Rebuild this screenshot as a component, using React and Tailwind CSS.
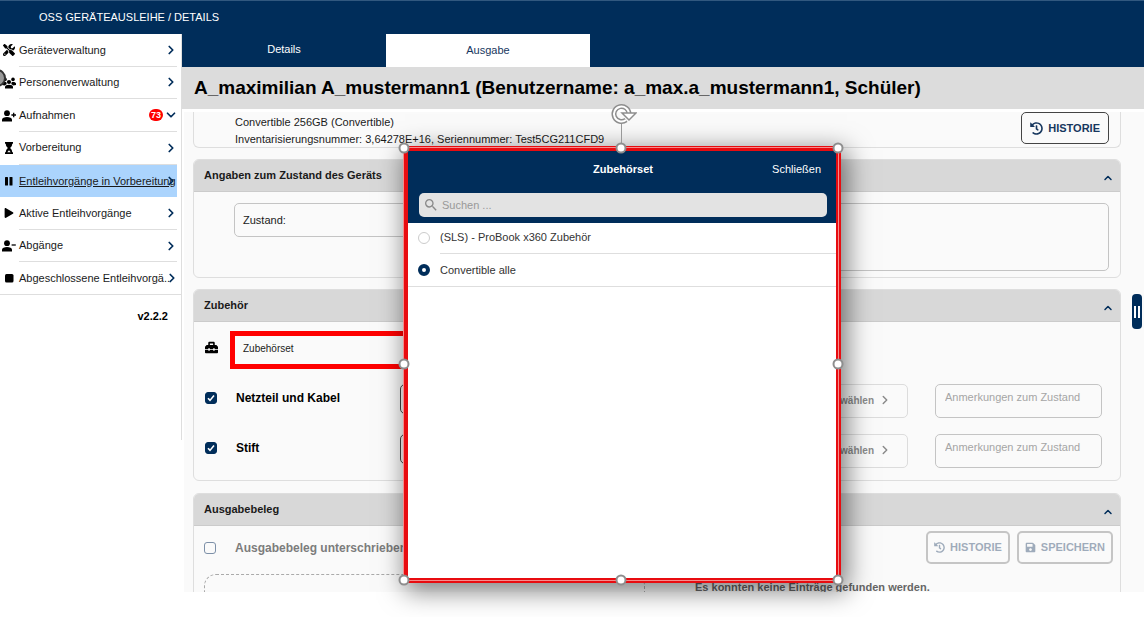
import React, { useState } from 'react';
import { FaHistory, FaPlay, FaSave, FaToolbox } from 'react-icons/fa';
import { FaScrewdriverWrench } from 'react-icons/fa6';
import { MdSearch } from 'react-icons/md';
import { ChevronDown, ChevronRight, ChevronUp } from 'lucide-react';

const PersonIcon = ({ sign, className }) => (
    <svg viewBox="0 0 14 12" className={className} fill="currentColor">
        <circle cx="5" cy="3.2" r="2.9" />
        <path d="M0 11.5V9.6C0 7.8 2.4 6.9 5 6.9s5 .9 5 2.7v1.9z" />
        <path d={sign} stroke="currentColor" strokeWidth="1.3" />
    </svg>
);
const PersonAddIcon = (props) => <PersonIcon sign="M9.4 5h4.6M11.7 2.7v4.6" {...props} />;
const PersonRemoveIcon = (props) => <PersonIcon sign="M9.6 5h4.2" {...props} />;

const GroupIcon = ({ className }) => (
    <svg viewBox="0 0 14 12" className={className} fill="currentColor">
        <circle cx="3" cy="2.4" r="1.8" />
        <circle cx="11" cy="2.4" r="1.8" />
        <circle cx="7" cy="5" r="2.1" />
        <path d="M3 11.5V10c0-1.5 1.8-2.2 4-2.2s4 .7 4 2.2v1.5z" />
        <path d="M0 8V6.6c0-1.4 2-2 4.200-1.600L4.800 7 2.800 8.500zM14 8V6.600c0-1.400-2-2-4.200-1.600L9.200 7l2 1.500z" />
    </svg>
);

const HourglassIcon = ({ className }) => (
    <svg viewBox="0 0 14 12" className={className} fill="currentColor">
        <path d="M3 0h8v1.700h-.8c0 2-.9 3.300-2.200 4.300 1.300 1 2.200 2.300 2.200 4.300h.8V12H3v-1.700h.8c0-2 .9-3.300 2.200-4.300C4.700 5 3.800 3.700 3.800 1.700H3z" />
        <path d="M5.300 10.300 7 8.300l1.700 2z" fill="white" />
    </svg>
);

const PauseIcon = ({ className }) => (
    <svg viewBox="0 0 14 12" className={className} fill="currentColor">
        <rect x="3" y="2" width="3" height="8.5" rx=".6" />
        <rect x="7.5" y="2" width="3" height="8.5" rx=".6" />
    </svg>
);

const StopIcon = ({ className }) => (
    <svg viewBox="0 0 14 12" className={className} fill="currentColor">
        <rect x="3" y="2" width="8.5" height="8.5" rx="1.5" />
    </svg>
);

const navItems = [
    { label: 'Geräteverwaltung', icon: FaScrewdriverWrench },
    { label: 'Personenverwaltung', icon: GroupIcon },
    { label: 'Aufnahmen', icon: PersonAddIcon, badge: 73 },
    { label: 'Vorbereitung', icon: HourglassIcon },
    { label: 'Entleihvorgänge in Vorbereitung', icon: PauseIcon, active: true },
    { label: 'Aktive Entleihvorgänge', icon: FaPlay, small: true },
    { label: 'Abgänge', icon: PersonRemoveIcon },
    { label: 'Abgeschlossene Entleihvorgä..', icon: StopIcon },
];

const NavItem = ({ item, last }) => {
    const Icon = item.icon;
    const Chevron = item.badge ? ChevronDown : ChevronRight;
    return (
        <li className={last ? '' : 'pr-1'}>
            <a href="#" className={`flex h-full items-center pl-[2px] ${item.active ? 'bg-[#abd4fd] underline' : ''} ${last ? 'border-b border-[#dedede]' : ''}`}>
                <span className="flex w-[17px] shrink-0 items-center justify-center pr-[3px] text-black">
                    <Icon className={item.small ? 'h-[10px] w-[14px] shrink-0' : 'h-3 w-[14px] shrink-0'} />
                </span>
                <span className={`relative flex h-full min-w-0 flex-1 items-center ${last || item.active ? '' : 'border-b border-[#dedede]'}`}>
                    <span className="whitespace-nowrap">{item.label}</span>
                    {item.badge && (
                        <span className="absolute right-[14px] rounded-full bg-[#f00] px-[2px] text-[9px] leading-[12px] font-bold text-white">{item.badge}</span>
                    )}
                    <Chevron className={`absolute size-[14px] text-[#002d5a] ${last ? 'right-[2px]' : '-right-px'}`} strokeWidth={3} />
                </span>
            </a>
        </li>
    );
};

const Card = ({ title, className = '', children }) => (
    <section className={`rounded-md border border-[#dedede] ${className}`}>
        <button type="button" className="flex h-8 w-full items-center justify-between rounded-t-[5px] border-b border-[#cbcbcb] bg-[#d8d8d8] pr-[6px] pl-[10px] font-bold">
            {title}
            <ChevronUp className="mt-1 size-3 text-[#002d5a]" strokeWidth={3} />
        </button>
        {children}
    </section>
);

const ActionButton = ({ icon: Icon, disabled, children }) => (
    <button
        type="button"
        disabled={disabled}
        className={`flex shrink-0 items-center gap-[5px] rounded-[5px] font-bold text-[#17375e] ${disabled ? 'h-[33px] border-2 border-[#777] px-[6px] opacity-40' : 'h-8 border border-[#444] px-2'}`}
    >
        <Icon className={disabled ? 'size-[11px]' : 'size-[13px]'} />
        {children}
    </button>
);

const CheckBox = ({ id, checked, onChange, disabled }) => (
    <span className="relative flex size-3 shrink-0">
        <input
            type="checkbox"
            id={id}
            checked={checked}
            onChange={onChange}
            disabled={disabled}
            className="size-3 appearance-none rounded-[3px] border border-[#002d5a] checked:bg-[#002d5a] disabled:border-[#7d90a8]"
        />
        {checked && (
            <svg viewBox="0 0 12 12" className="pointer-events-none absolute inset-0 size-3" fill="none" stroke="white" strokeWidth="1.6">
                <path d="M3 6.2 5 8.4 9 3.6" />
            </svg>
        )}
    </span>
);

const AccessoryRow = ({ id, label }) => {
    const [checked, setChecked] = useState(true);
    return (
        <div className="flex h-[34px] items-center">
            <div className="flex w-[195px] shrink-0 items-center pb-[6px]">
                <CheckBox id={id} checked={checked} onChange={() => setChecked(!checked)} />
                <label htmlFor={id} className="flex-1 pl-[19px] text-xs font-bold text-black">{label}</label>
            </div>
            <button type="button" aria-label={`${label} Anzahl`} className="mb-1 h-[30px] flex-1 rounded-[5px] border border-[#444]" />
            <button type="button" disabled className="ml-6 flex h-[34px] w-[168px] shrink-0 items-center justify-end gap-1 rounded-[5px] border border-[#dcdcdc] pr-[15px] pb-[2px] text-[10px] font-bold text-[#8a8a8a]">
                Auswählen
                <ChevronRight className="size-[14px]" strokeWidth={2.5} />
            </button>
            <input
                type="text"
                aria-label={`${label} Anmerkungen`}
                placeholder="Anmerkungen zum Zustand"
                className="ml-[27px] h-[34px] w-[167px] shrink-0 rounded-[5px] border border-[#c4c4c4] px-[9px] pb-2 placeholder:text-[#a5a5a5]"
            />
        </div>
    );
};

const Handle = ({ className }) => (
    <span className={`absolute size-[11px] -translate-x-1/2 -translate-y-1/2 rounded-full border-2 border-[#8e8e8e] bg-white ${className}`} />
);

const sets = ['(SLS) - ProBook x360 Zubehör', 'Convertible alle'];

const AccessoryDialog = () => {
    const [selected, setSelected] = useState(sets[1]);
    return (
        <div className="absolute top-[146px] left-[403px] flex h-[437px] w-[438px] flex-col border-[5px] border-[#e80c10] bg-white shadow-[4px_6px_24px_2px_rgba(0,0,0,0.5)]" role="dialog" aria-label="Zubehörset">
            <header className="bg-[#002d5a] pr-[9px] pb-[6px] pl-[11px] text-white">
                <div className="grid h-9 grid-cols-[1fr_auto_1fr] items-center">
                    <span />
                    <h2 className="font-bold">Zubehörset</h2>
                    <button type="button" className="mr-[6px] justify-self-end">Schließen</button>
                </div>
                <label className="mt-[6px] flex h-6 items-center gap-[3px] rounded-[5px] bg-[#e3e3e3] px-1">
                    <MdSearch className="size-4 shrink-0 text-[#888]" />
                    <input type="search" placeholder="Suchen ..." aria-label="Suchen" className="min-w-0 flex-1 text-black outline-none placeholder:text-[#999]" />
                </label>
            </header>
            <ul className="border-b border-[#dedede]">
                {sets.map((set, i) => (
                    <li key={set}>
                        <label className={`flex items-center pl-[10px] text-[#333] ${i === 0 ? 'h-[31px] pb-[2px]' : 'h-8'}`}>
                            <input
                                type="radio"
                                name="set"
                                checked={selected === set}
                                onChange={() => setSelected(set)}
                                className="size-3 shrink-0 appearance-none rounded-full border border-[#ccc] bg-white checked:border-4 checked:border-[#002d5a]"
                            />
                            <span className="ml-[10px]">{set}</span>
                        </label>
                        {i === 0 && <hr className="-mt-px ml-8 border-[#dedede]" />}
                    </li>
                ))}
            </ul>

            {/* selection frame with its resize handles */}
            <div className="pointer-events-none absolute -top-1 -right-[3px] -bottom-[3px] -left-[5px] border border-[#f58d8d]">
                <span className="absolute bottom-full left-1/2 h-[28px] w-px bg-[#999]" />
                <svg viewBox="0 0 26 22" className="absolute -top-[45px] left-1/2 h-[22px] w-[26px] -translate-x-[10px]">
                    <path d="M18 11A7.5 7.5 0 1 0 15 17" fill="none" stroke="#8e8e8e" strokeWidth="5" />
                    <path d="M18 11A7.5 7.5 0 1 0 15 17" fill="none" stroke="#fff" strokeWidth="2" />
                    <path d="M11 10h14l-7 7z" fill="#fff" stroke="#8e8e8e" strokeWidth="1.5" />
                </svg>
                <Handle className="top-0 left-0" />
                <Handle className="top-0 left-1/2" />
                <Handle className="top-0 left-full" />
                <Handle className="top-1/2 left-0" />
                <Handle className="top-1/2 left-full" />
                <Handle className="top-full left-0" />
                <Handle className="top-full left-1/2" />
                <Handle className="top-full left-full" />
            </div>
        </div>
    );
};

const App = () => {
    return (
        <div className="relative flex h-screen flex-col overflow-hidden bg-white pb-[25px] font-['Liberation_Sans',Arial,sans-serif] text-[11px] text-[#1a1a1a]">
            <header className="flex h-[34px] shrink-0 items-center border-t border-[#31587f] bg-[#002d5a] pb-px pl-[39px] text-white">
                <h1>OSS GERÄTEAUSLEIHE / DETAILS</h1>
            </header>

            <div className="flex min-h-0 flex-1">
                <aside className="w-[182px] shrink-0">
                    <nav className="h-[406px] border-r border-[#dedede]">
                        <ul className="grid h-[261px] grid-cols-1 grid-rows-8">
                            {navItems.map((item, i) => (
                                <NavItem key={item.label} item={item} last={i === navItems.length - 1} />
                            ))}
                        </ul>
                        <p className="pt-[13px] pr-[13px] text-right font-bold text-black">v2.2.2</p>
                    </nav>
                </aside>

                <main className="flex min-w-0 flex-1 flex-col">
                    <div className="flex h-[33px] shrink-0 bg-[#002d5a]">
                        <button type="button" className="w-[204px] pb-[2px] text-white">Details</button>
                        <button type="button" className="w-[204px] bg-white text-[#17375e]">Ausgabe</button>
                    </div>
                    <h2 className="shrink-0 bg-[#dcdcdc] pl-3 text-[19px] leading-[42px] font-bold text-black">
                        A_maximilian A_mustermann1 (Benutzername: a_max.a_mustermann1, Schüler)
                    </h2>

                    <div className="mt-[3px] ml-[2px] min-h-0 flex-1 overflow-hidden bg-[#fafafa] pr-[23px] pl-[9px]">
                        <section className="flex h-9 items-start justify-between rounded-b-md border border-t-0 border-[#dedede] pr-[11px] pl-[41px]">
                            <div className="pt-[2px] leading-[17px]">
                                <p>Convertible 256GB (Convertible)</p>
                                <p>Inventarisierungsnummer: 3,64278E+16, Seriennummer: Test5CG211CFD9</p>
                            </div>
                            <ActionButton icon={FaHistory}>HISTORIE</ActionButton>
                        </section>

                        <Card title="Angaben zum Zustand des Geräts" className="mt-[11px]">
                            <div className="flex items-start gap-6 pt-[11px] pr-[11px] pb-[6px] pl-[40px]">
                                <button type="button" className="h-[34px] flex-1 rounded-[5px] border border-[#c4c4c4] px-2 text-left">Zustand:</button>
                                <textarea aria-label="Anmerkungen" className="h-[68px] flex-1 resize-none rounded-[5px] border border-[#c4c4c4]" />
                            </div>
                        </Card>

                        <Card title="Zubehör" className="mt-[11px]">
                            <div className="flex flex-col gap-4 pt-[9px] pr-[18px] pb-3 pl-[11px]">
                                <div className="flex h-[37px] items-center">
                                    <FaToolbox className="mb-[5px] size-[13px] shrink-0 text-black" />
                                    <button type="button" className="ml-3 h-[38px] w-1/2 border-[5px] border-[#f00] px-[8px] pb-[2px] text-left text-[10px]">Zubehörset</button>
                                </div>
                                <AccessoryRow id="netzteil" label="Netzteil und Kabel" />
                                <AccessoryRow id="stift" label="Stift" />
                            </div>
                        </Card>

                        <Card title="Ausgabebeleg" className="mt-3">
                            <div className="flex items-center gap-[7px] pt-[5px] pr-[7px] pl-[10px]">
                                <CheckBox id="beleg" checked={false} disabled />
                                <label htmlFor="beleg" className="flex-1 pl-3 text-xs font-bold text-[#7c7c7c]">Ausgabebeleg unterschrieben</label>
                                <ActionButton icon={FaHistory} disabled>HISTORIE</ActionButton>
                                <ActionButton icon={FaSave} disabled>SPEICHERN</ActionButton>
                            </div>
                            <div className="flex gap-[50px] pt-[10px] pl-[10px]">
                                <div className="h-24 w-[441px] rounded-xl border border-dashed border-[#aaa]" />
                                <p className="pt-2 leading-[11px] font-bold text-[#666]">Es konnten keine Einträge gefunden werden.</p>
                            </div>
                        </Card>
                    </div>
                </main>
            </div>

            <AccessoryDialog />

            <span className="absolute top-[69px] -left-[12px] size-[18px] rounded-full border-2 border-[#333] bg-[#999]" />
            <button type="button" aria-label="Seitenleiste" className="absolute top-[294px] right-[2px] flex h-[35px] w-[10px] items-center justify-center gap-[2px] rounded-[4px] bg-[#002d5a]">
                <span className="h-3 w-[2px] bg-white" />
                <span className="h-3 w-[2px] bg-white" />
            </button>
        </div>
    );
};

export default App;
